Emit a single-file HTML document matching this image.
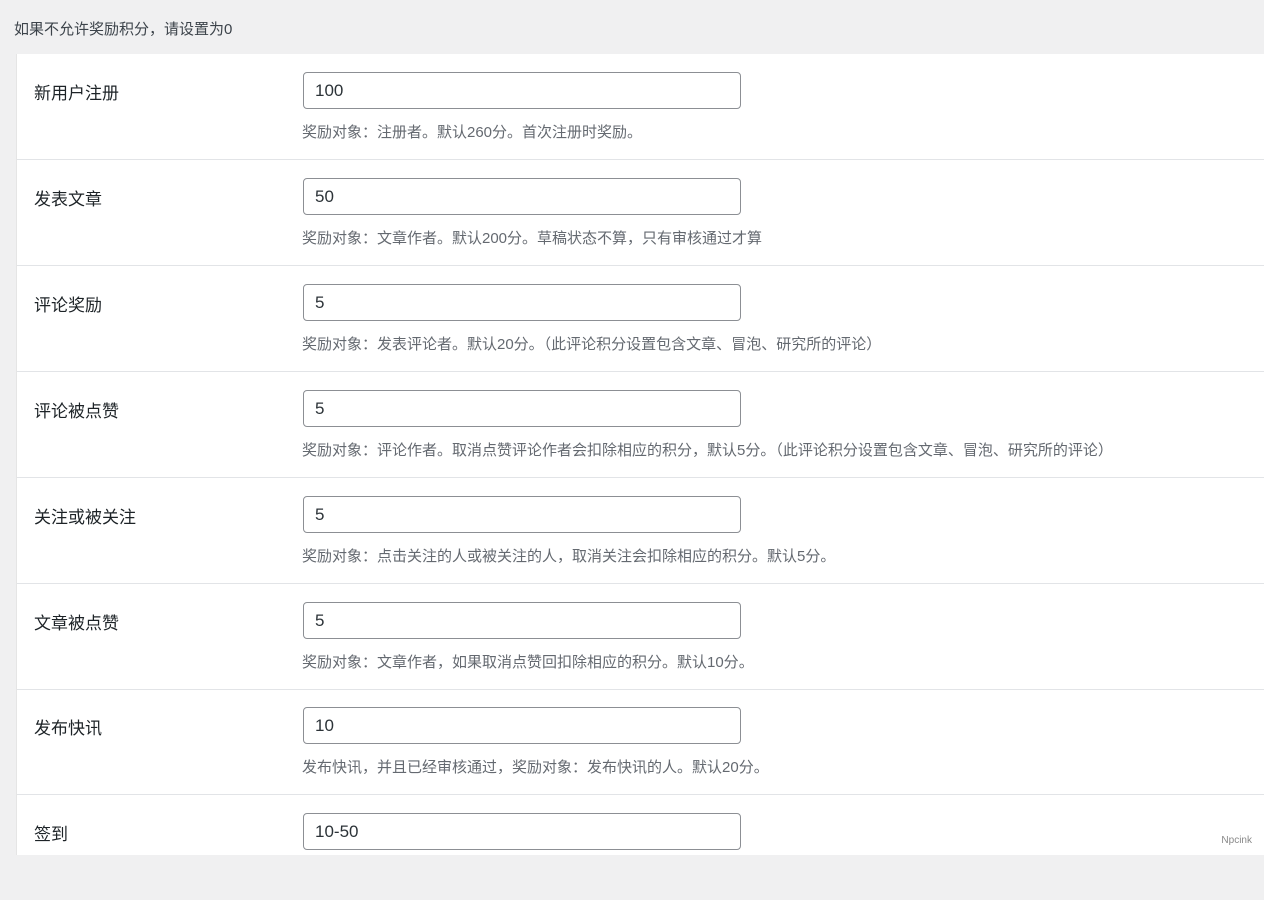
<!DOCTYPE html>
<html><head><meta charset="utf-8"><style>
body{margin:0;background:#f0f0f1;font-family:"Liberation Sans","Noto Sans CJK SC",sans-serif;width:1264px;height:855px;overflow:hidden;position:relative}
.top{position:absolute;left:14px;top:18px;font-size:15px;color:#3c434a}
.panel{position:absolute;left:16px;top:54px;width:1248px;height:801px;background:#fff;border-left:1px solid #e5e5e5}
.row{position:absolute;left:0;width:1248px;height:105px;border-bottom:1px solid #e2e4e7}
.lab{position:absolute;left:17px;top:25px;font-size:17px;color:#1d2327}
.inp{position:absolute;left:286px;top:18px;width:436px;height:35px;border:1px solid #8c8f94;border-radius:4px;font-size:17px;color:#2c3338;line-height:35px;padding-left:11px;box-sizing:border-box;width:438px;height:37px}
.desc{position:absolute;left:285px;top:67px;font-size:15px;color:#646970}
.mark{position:absolute;right:12px;bottom:9px;font-size:10px;color:#888}
</style></head><body>
<div class="top">如果不允许奖励积分，请设置为0</div>
<div class="panel">
<div class="row" style="top:0"><div class="lab">新用户注册</div><div class="inp">100</div><div class="desc">奖励对象：注册者。默认260分。首次注册时奖励。</div></div>
<div class="row" style="top:106px"><div class="lab">发表文章</div><div class="inp">50</div><div class="desc">奖励对象：文章作者。默认200分。草稿状态不算，只有审核通过才算</div></div>
<div class="row" style="top:212px"><div class="lab">评论奖励</div><div class="inp">5</div><div class="desc">奖励对象：发表评论者。默认20分。（此评论积分设置包含文章、冒泡、研究所的评论）</div></div>
<div class="row" style="top:318px"><div class="lab">评论被点赞</div><div class="inp">5</div><div class="desc">奖励对象：评论作者。取消点赞评论作者会扣除相应的积分，默认5分。（此评论积分设置包含文章、冒泡、研究所的评论）</div></div>
<div class="row" style="top:424px"><div class="lab">关注或被关注</div><div class="inp">5</div><div class="desc">奖励对象：点击关注的人或被关注的人，取消关注会扣除相应的积分。默认5分。</div></div>
<div class="row" style="top:530px"><div class="lab">文章被点赞</div><div class="inp">5</div><div class="desc">奖励对象：文章作者，如果取消点赞回扣除相应的积分。默认10分。</div></div>
<div class="row" style="top:635px"><div class="lab">发布快讯</div><div class="inp">10</div><div class="desc">发布快讯，并且已经审核通过，奖励对象：发布快讯的人。默认20分。</div></div>
<div class="row" style="top:741px;border-bottom:none"><div class="lab">签到</div><div class="inp">10-50</div></div>
</div>
<div class="mark">Npcink</div>
</body></html>
